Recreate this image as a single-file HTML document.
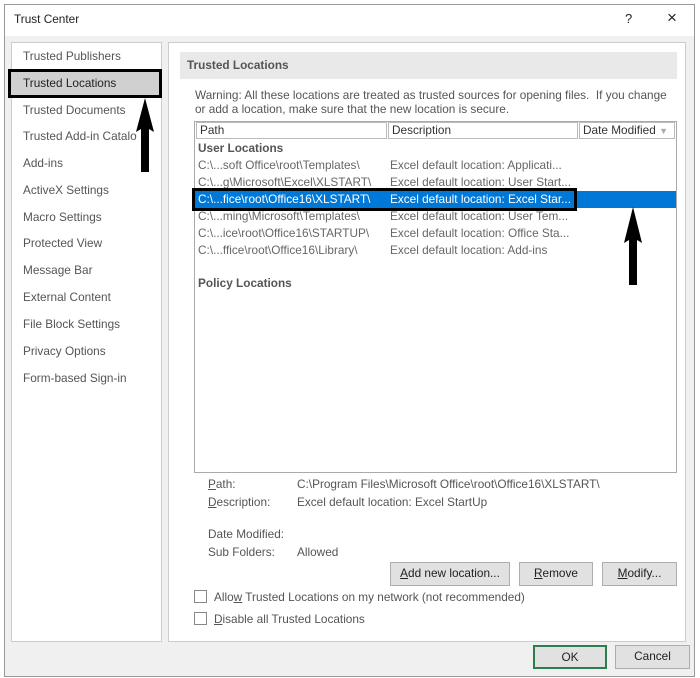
<!DOCTYPE html>
<html><head><style>
*{margin:0;padding:0;box-sizing:border-box}
body{width:700px;height:678px;background:#fff;font-family:"Liberation Sans",sans-serif;font-size:11.8px;color:#333;position:relative;overflow:hidden}
.a{position:absolute;white-space:nowrap}
.btn{position:absolute;border:1px solid #adadad;background:#e1e1e1;text-align:center;line-height:21px;color:#222}
.cb{position:absolute;width:13px;height:13px;border:1px solid #888;background:#fff}
.li{position:absolute;left:23px;color:#555}
.row{position:absolute;left:198px;color:#666}
.d{position:absolute;left:390px;color:#666}
</style></head><body>
<div class="a" style="left:4px;top:4px;width:691px;height:673px;border:1px solid #999;background:#f0f0f0"></div>
<div class="a" style="left:5px;top:5px;width:689px;height:31px;background:#fff"></div>
<div class="a" style="left:14px;top:12px;color:#222">Trust Center</div>
<div class="a" style="left:625px;top:11px;color:#222;font-size:13px">?</div>
<div class="a" style="left:667px;top:8px;color:#222;font-size:17px">×</div>
<div class="a" style="left:11px;top:42px;width:151px;height:600px;background:#fff;border:1px solid #ccc"></div>
<div class="a" style="left:168px;top:42px;width:518px;height:600px;background:#fff;border:1px solid #ccc"></div>
<div class="a" style="left:8px;top:69px;width:154px;height:29px;background:#d0d0d0;border:3px solid #000"></div>
<div class="li" style="top:49px">Trusted Publishers</div>
<div class="li" style="top:76px;color:#222">Trusted Locations</div>
<div class="li" style="top:103px">Trusted Documents</div>
<div class="li" style="top:129px">Trusted Add-in Catalo</div>
<div class="li" style="top:156px">Add-ins</div>
<div class="li" style="top:183px">ActiveX Settings</div>
<div class="li" style="top:210px">Macro Settings</div>
<div class="li" style="top:236px">Protected View</div>
<div class="li" style="top:263px">Message Bar</div>
<div class="li" style="top:290px">External Content</div>
<div class="li" style="top:317px">File Block Settings</div>
<div class="li" style="top:344px">Privacy Options</div>
<div class="li" style="top:371px">Form-based Sign-in</div>
<svg class="a" style="left:134px;top:96px" width="22" height="80"><path d="M11 2 L20 36 L15 33 L15 76 L7 76 L7 33 L2 36 Z" fill="#000"/></svg>
<div class="a" style="left:180px;top:52px;width:497px;height:27px;background:#e9e9e9"></div>
<div class="a" style="left:187px;top:58px;font-weight:bold;color:#555">Trusted Locations</div>
<div class="a" style="left:195px;top:88px;color:#555;line-height:14px">Warning: All these locations are treated as trusted sources for opening files.&nbsp; If you change<br>or add a location, make sure that the new location is secure.</div>
<div class="a" style="left:194px;top:121px;width:483px;height:352px;border:1px solid #aaa;background:#fff"></div>
<div class="a" style="left:196px;top:122px;width:191px;height:17px;border:1px solid #bbb;padding-left:3px;line-height:15px;color:#333">Path</div>
<div class="a" style="left:388px;top:122px;width:190px;height:17px;border:1px solid #bbb;padding-left:3px;line-height:15px;color:#333">Description</div>
<div class="a" style="left:579px;top:122px;width:96px;height:17px;border:1px solid #bbb;padding-left:3px;line-height:15px;color:#333">Date Modified <span style="color:#aaa;font-size:9px">▼</span></div>
<div class="row" style="top:141px;font-weight:bold;color:#555">User Locations</div>
<div class="row" style="top:158px">C:\...soft Office\root\Templates\</div><div class="d" style="top:158px">Excel default location: Applicati...</div>
<div class="row" style="top:175px">C:\...g\Microsoft\Excel\XLSTART\</div><div class="d" style="top:175px">Excel default location: User Start...</div>
<div class="a" style="left:195px;top:191px;width:481px;height:17px;background:#0078d7"></div>
<div class="a" style="left:192px;top:188px;width:385px;height:23px;border:3px solid #000"></div>
<div class="row" style="top:192px;color:#fff">C:\...fice\root\Office16\XLSTART\</div><div class="d" style="top:192px;color:#fff">Excel default location: Excel Star...</div>
<div class="row" style="top:209px">C:\...ming\Microsoft\Templates\</div><div class="d" style="top:209px">Excel default location: User Tem...</div>
<div class="row" style="top:226px">C:\...ice\root\Office16\STARTUP\</div><div class="d" style="top:226px">Excel default location: Office Sta...</div>
<div class="row" style="top:243px">C:\...ffice\root\Office16\Library\</div><div class="d" style="top:243px">Excel default location: Add-ins</div>
<div class="row" style="top:276px;font-weight:bold;color:#555">Policy Locations</div>
<svg class="a" style="left:622px;top:205px" width="22" height="82"><path d="M11 2 L20 38 L15 35 L15 80 L7 80 L7 35 L2 38 Z" fill="#000"/></svg>
<div class="a" style="left:208px;top:477px;color:#555"><u>P</u>ath:</div>
<div class="a" style="left:297px;top:477px;color:#555">C:\Program Files\Microsoft Office\root\Office16\XLSTART\</div>
<div class="a" style="left:208px;top:495px;color:#555"><u>D</u>escription:</div>
<div class="a" style="left:297px;top:495px;color:#555">Excel default location: Excel StartUp</div>
<div class="a" style="left:208px;top:527px;color:#555">Date Modified:</div>
<div class="a" style="left:208px;top:545px;color:#555">Sub Folders:</div>
<div class="a" style="left:297px;top:545px;color:#555">Allowed</div>
<div class="btn" style="left:390px;top:562px;width:120px;height:24px"><u>A</u>dd new location...</div>
<div class="btn" style="left:519px;top:562px;width:74px;height:24px"><u>R</u>emove</div>
<div class="btn" style="left:602px;top:562px;width:75px;height:24px"><u>M</u>odify...</div>
<div class="cb" style="left:194px;top:590px"></div>
<div class="a" style="left:214px;top:590px;color:#555">Allo<u>w</u> Trusted Locations on my network (not recommended)</div>
<div class="cb" style="left:194px;top:612px"></div>
<div class="a" style="left:214px;top:612px;color:#555"><u>D</u>isable all Trusted Locations</div>
<div class="btn" style="left:533px;top:645px;width:74px;height:24px;border:2px solid #2e7d4f;line-height:20px">OK</div>
<div class="btn" style="left:615px;top:645px;width:75px;height:24px">Cancel</div>
</body></html>
